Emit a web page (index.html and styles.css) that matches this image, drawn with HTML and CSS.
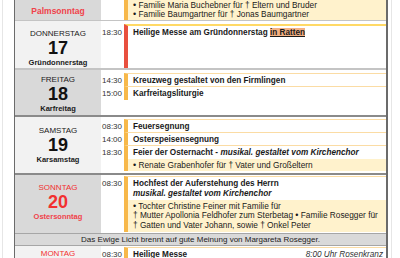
FILE: index.html
```html
<!DOCTYPE html>
<html lang="de">
<head>
<meta charset="utf-8">
<title>Gottesdienstordnung</title>
<link rel="stylesheet" href="styles.css">
</head>
<body>
<div class="page">
  <div class="sheet">

    <div class="day day-first">
      <div class="daycell shade pal">
        <div class="feast feast-palm red">Palmsonntag</div>
      </div>
      <div class="events">
        <div class="event event-fill">
          <div class="time"></div>
          <div class="content bar-orange note-only">
            <div class="note">
              <div class="nl"><span class="dot">•</span> Familie Maria Buchebner für † Eltern und Bruder</div>
              <div class="nl"><span class="dot">•</span> Familie Baumgartner für † Jonas Baumgartner</div>
            </div>
          </div>
        </div>
      </div>
    </div>

    <div class="day day-thu">
      <div class="daycell light pt8">
        <div class="wd">DONNERSTAG</div>
        <div class="num">17</div>
        <div class="feast">Gründonnerstag</div>
      </div>
      <div class="events">
        <div class="event event-fill">
          <div class="time time-thu">18:30</div>
          <div class="content bar-red top-yellow"><b>Heilige Messe am Gründonnerstag <span class="hl">in Ratten</span></b></div>
        </div>
      </div>
    </div>

    <div class="day day-fri">
      <div class="daycell shade pt5">
        <div class="wd">FREITAG</div>
        <div class="num">18</div>
        <div class="feast">Karfreitag</div>
      </div>
      <div class="events">
        <div class="event">
          <div class="time">14:30</div>
          <div class="content bar-orange"><b>Kreuzweg gestaltet von den Firmlingen</b></div>
        </div>
        <div class="event">
          <div class="time">15:00</div>
          <div class="content bar-orange tall"><b>Karfreitagsliturgie</b></div>
        </div>
      </div>
    </div>

    <div class="day day-sat dark-top">
      <div class="daycell light pt9">
        <div class="wd">SAMSTAG</div>
        <div class="num">19</div>
        <div class="feast">Karsamstag</div>
      </div>
      <div class="events events-sat">
        <div class="event">
          <div class="time">08:30</div>
          <div class="content bar-orange"><b>Feuersegnung</b></div>
        </div>
        <div class="event">
          <div class="time">14:00</div>
          <div class="content bar-orange"><b>Osterspeisensegnung</b></div>
        </div>
        <div class="event">
          <div class="time">18:30</div>
          <div class="content bar-orange">
            <b>Feier der Osternacht - <i>musikal. gestaltet vom Kirchenchor</i></b>
            <div class="note note-sat"><div class="nl nl-sat"><span class="dot">•</span> Renate Grabenhofer für † Vater und Großeltern</div></div>
          </div>
        </div>
      </div>
    </div>

    <div class="day day-sun dark-top">
      <div class="daycell shade pt8">
        <div class="wd red">SONNTAG</div>
        <div class="num red">20</div>
        <div class="feast red">Ostersonntag</div>
      </div>
      <div class="events events-sun">
        <div class="event">
          <div class="time">08:30</div>
          <div class="content bar-orange">
            <b>Hochfest der Auferstehung des Herrn</b>
            <div class="sub"><b><i>musikal. gestaltet vom Kirchenchor</i></b></div>
            <div class="note note-sun">
              <div class="nl"><span class="dot">•</span> Tochter Christine Feiner mit Familie für</div>
              <div class="nl">† Mutter Apollonia Feldhofer zum Sterbetag <span class="dot">•</span> Familie Rosegger für</div>
              <div class="nl">† Gatten und Vater Johann, sowie † Onkel Peter</div>
            </div>
          </div>
        </div>
      </div>
    </div>

    <div class="notice">Das Ewige Licht brennt auf gute Meinung von Margareta Rosegger.</div>

    <div class="day day-mon">
      <div class="daycell light pt3">
        <div class="wd red">MONTAG</div>
      </div>
      <div class="events events-mon">
        <div class="event">
          <div class="time">08:30</div>
          <div class="content bar-orange split"><b>Heilige Messe</b><i>8:00 Uhr Rosenkranz</i></div>
        </div>
      </div>
    </div>

  </div>
</div>
</body>
</html>
```

FILE: styles.css
```css
html, body {
  margin: 0;
  padding: 0;
  background: #ffffff;
}
body {
  font-family: "Liberation Sans", Arial, sans-serif;
  font-size: 8px;
  color: #1a1a1a;
  height: 258px;
  overflow: hidden;
}
.page {
  margin-left: 2px;
  width: 390px;
  height: 258px;
  border-left: 1px solid #e6e6e6;
  border-right: 1px solid #e6e6e6;
  box-sizing: border-box;
}
.sheet {
  margin-left: 11px;
  width: 374px;
  border-left: 1px solid #6b6b6b;
  border-right: 2px solid #6b6b6b;
  box-sizing: border-box;
}
.day {
  display: flex;
  border-top: 2px solid #c4c4c4;
  overflow: hidden;
}
.day-first {
  border-top: none;
  height: 20px;
}
.day-thu { height: 47px; border-top-width: 1px; }
.day-fri { height: 45px; }
.day-sat { height: 56px; }
.day-sun { height: 58px; }
.dark-top {
  border-top-color: #8a8a8a;
}
.daycell {
  width: 86px;
  flex: none;
  display: flex;
  flex-direction: column;
  align-items: center;
  text-align: center;
  box-sizing: border-box;
}
.pal { justify-content: center; padding-top: 1px; }
.pt3 { padding-top: 3px; }
.pt5 { padding-top: 5px; }
.pt8 { padding-top: 8px; }
.pt9 { padding-top: 9px; }
.shade { background: #d9d9d9; }
.light { background: #f2f2f2; }
.wd {
  font-size: 8px;
  line-height: 10px;
}
.num {
  font-size: 18px;
  font-weight: bold;
  line-height: 18px;
  color: #111;
}
.feast {
  font-size: 7.5px;
  font-weight: bold;
  line-height: 10px;
  margin-top: 1px;
}
.feast-palm {
  font-size: 8.5px;
  margin-top: 0;
}
.red { color: #f23030; }
.feast.red, .feast-palm { color: #f0424a; }

.events {
  flex: 1;
  display: flex;
  flex-direction: column;
  padding-top: 3px;
}
.day-first .events { padding-top: 0; }
.events-sat { padding-top: 2px; }
.events-sun { padding-top: 1px; }
.events-mon { padding-top: 1px; }
.event {
  display: flex;
}
.event-fill { flex: 1; }
.time {
  width: 22px;
  flex: none;
  text-align: center;
  line-height: 11px;
  padding-top: 2px;
  color: #333;
}
.time-thu { padding-top: 3px; }
.content {
  flex: 1;
  margin-left: 1px;
  border-top: 1px solid #fbdca4;
  padding: 1px 5px 0 5px;
  line-height: 11px;
  font-size: 8.2px;
  color: #1a1a1a;
}
.content.tall { padding-bottom: 1px; }
.bar-orange { border-left: 4px solid #f7b84a; }
.bar-red { border-left: 4px solid #e8503f; }
.top-yellow {
  border-top: 2px solid #ffd966;
  padding-top: 1px;
}
.note-only {
  border-top: none;
  padding: 0;
  background: #fff2cc;
}
.note {
  background: #fff2cc;
  font-size: 8.3px;
  padding: 0 5px;
}
.nl {
  height: 9.5px;
  line-height: 9.5px;
  white-space: nowrap;
  overflow: visible;
}
.nl-sat {
  height: 11px;
  line-height: 11px;
}
.note-only .note { padding: 0.5px 5px; }
.note-sat {
  margin: 1px -5px 0 -5px;
  padding: 0.5px 5px;
}
.note-sun {
  margin: 1px -5px 0 -5px;
  padding: 1.5px 5px 2px 5px;
}
.sub { line-height: 10px; }
.dot {
  font-size: 9px;
  line-height: 1px;
}
.hl {
  background: #f4b183;
  text-decoration: underline;
}
.notice {
  background: #d9d9d9;
  border-top: 1px solid #a6a6a6;
  text-align: center;
  line-height: 11px;
  color: #222;
}
.day-mon {
  border-top: 1px solid #a6a6a6;
  height: 14px;
}
.split {
  display: flex;
  justify-content: space-between;
  padding-right: 3px;
}
.split i { color: #333; }
```
